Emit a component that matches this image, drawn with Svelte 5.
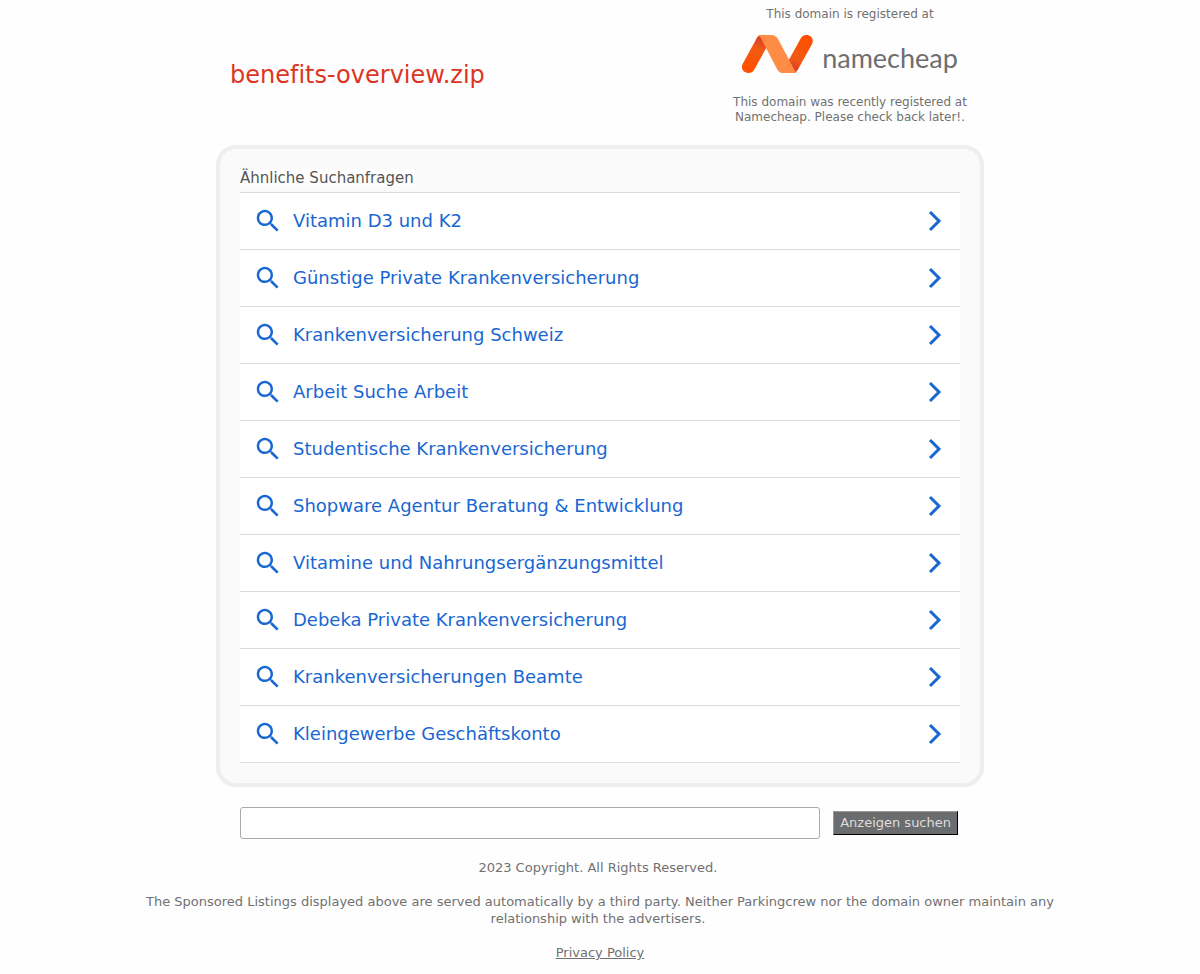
<script>
  const searches = [
    'Vitamin D3 und K2',
    'Günstige Private Krankenversicherung',
    'Krankenversicherung Schweiz',
    'Arbeit Suche Arbeit',
    'Studentische Krankenversicherung',
    'Shopware Agentur Beratung & Entwicklung',
    'Vitamine und Nahrungsergänzungsmittel',
    'Debeka Private Krankenversicherung',
    'Krankenversicherungen Beamte',
    'Kleingewerbe Geschäftskonto'
  ];
  let query = $state('');
</script>

<div class="page">
  <header>
    <h1>benefits-overview.zip</h1>
    <div class="registrar">
      <p>This domain is registered at</p>
      <a class="logo" href="#namecheap">
        <svg width="72" height="38" viewBox="0 0 72 38" aria-hidden="true">
          <defs>
            <linearGradient id="left" x1="20" y1="3" x2="6" y2="32" gradientUnits="userSpaceOnUse">
              <stop offset="0" stop-color="#d93d27" />
              <stop offset="0.35" stop-color="#f05a14" />
              <stop offset="1" stop-color="#ff5000" />
            </linearGradient>
            <linearGradient id="right" x1="51" y1="35" x2="65" y2="6" gradientUnits="userSpaceOnUse">
              <stop offset="0" stop-color="#d93d27" />
              <stop offset="0.35" stop-color="#f05a14" />
              <stop offset="1" stop-color="#ff5000" />
            </linearGradient>
          </defs>
          <path fill="url(#left)" d="M19 0C16.500 .4 15.400 1.800 14.400 3.700L.9 28.400C-1.700 33.200 1.300 38 6.400 38C9.400 38 11.300 36.600 12.500 34.300L25 11.500Z" />
          <path fill="url(#right)" d="M51.500 38C54 37.600 55.100 36.200 56.100 34.300L69.800 9.600C72.400 4.800 69.600 0 64.500 0C61.500 0 59.700 1.400 58.500 3.700L46 26.500Z" />
          <path fill="#ff8c44" d="M18.500 0H29C32.500 0 34.400 1.200 35.700 3.600L51.700 33.500C53 36 53.500 37.400 55 36.600C54 37.600 53 38 51.500 38H42C38.500 38 36.600 36.800 35.300 34.400L19.500 4.300C18.500 2.300 17.900 1.100 16 1.200C16.900 .3 17.600 0 18.500 0Z" />
        </svg>
        <span>namecheap</span>
      </a>
      <p>This domain was recently registered at Namecheap. Please check back later!.</p>
    </div>
  </header>

  <main>
    <h2><span>Ähnliche Suchanfragen</span></h2>
    <ul>
      {#each searches as term}
        <li>
          <a href="#{encodeURIComponent(term)}">
            <svg class="lens" viewBox="0 0 24 24" aria-hidden="true">
              <path d="M15.500 14h-.79l-.28-.27C15.410 12.590 16 11.110 16 9.500 16 5.910 13.090 3 9.500 3S3 5.910 3 9.500 5.910 16 9.500 16c1.610 0 3.090-.59 4.230-1.570l.27.28v.79l5 4.990L20.490 19l-4.990-5zm-6 0C7.010 14 5 11.990 5 9.500S7.010 5 9.500 5 14 7.010 14 9.500 11.990 14 9.500 14z" />
            </svg>
            <span>{term}</span>
            <svg class="arrow" viewBox="0 0 14 22" aria-hidden="true">
              <path d="M2 2L11 11L2 20" />
            </svg>
          </a>
        </li>
      {/each}
    </ul>
  </main>

  <form onsubmit={(event) => event.preventDefault()}>
    <input type="text" aria-label="Anzeigen suchen" bind:value={query} />
    <button type="submit">Anzeigen suchen</button>
  </form>

  <footer>
    <p>2023 Copyright. All Rights Reserved.&nbsp;</p>
    <p>The Sponsored Listings displayed above are served automatically by a third party. Neither Parkingcrew nor the domain owner maintain any relationship with the advertisers.&nbsp;</p>
    <p><a href="#privacy">Privacy Policy</a></p>
  </footer>
</div>

<style>
  :global(body) {
    margin: 0;
    background: #fefefe;
  }
  .page {
    font-family: "DejaVu Sans", Verdana, sans-serif;
    color: #717171;
    font-variant-ligatures: none;
  }
  .page * {
    box-sizing: border-box;
  }
  header, main, form {
    max-width: 768px;
    margin: 0 auto;
  }
  header {
    display: flex;
    justify-content: space-between;
    align-items: flex-end;
    padding: 7px 4px 20px 14px;
  }
  h1 {
    margin: 0 0 35px;
    font-size: 24px;
    line-height: 30px;
    font-weight: 400;
    color: #dc3522;
  }
  .registrar {
    width: 260px;
    padding: 0 8px;
    text-align: center;
    font-size: 12px;
    line-height: 15px;
  }
  .registrar p {
    margin: 0;
  }
  .logo {
    display: flex;
    gap: 8px;
    align-items: center;
    justify-content: center;
    height: 38px;
    margin: 13px 0 22px;
    color: #6d6e70;
    text-decoration: none;
  }
  .logo span {
    font-family: Lato, sans-serif;
    font-size: 27px;
    font-weight: 400;
    line-height: 38px;
    padding-top: 8px;
  }
  main {
    padding: 20px;
    border: 4px solid #eee;
    border-radius: 20px;
    background: #fafafa;
  }
  h2 {
    margin: 0;
    font-size: 15px;
    line-height: 18px;
    font-weight: 400;
    color: #555;
    padding-bottom: 5px;
  }
  h2 span {
    background: #fefefe;
  }
  ul {
    margin: 0;
    padding: 0;
    list-style: none;
    border-top: 1px solid #dcdcdf;
    background: #fff;
  }
  li {
    border-bottom: 1px solid #dcdcdf;
  }
  li a {
    display: flex;
    align-items: center;
    min-height: 56px;
    padding: 0 18px 0 13px;
    font-size: 18px;
    line-height: 22px;
    color: #1967d2;
    text-decoration: none;
  }
  li svg {
    flex: none;
  }
  .lens {
    width: 30px;
    height: 30px;
    margin-right: 10px;
    fill: #1967d2;
  }
  .arrow {
    width: 14px;
    height: 22px;
    margin-left: auto;
    fill: none;
    stroke: #1967d2;
    stroke-width: 3;
  }
  form {
    display: flex;
    align-items: center;
    gap: 13px;
    padding: 20px 26px 20px 24px;
  }
  input {
    flex: 1;
    min-width: 0;
    height: 32px;
    padding: 0 8px;
    border: 1px solid #aaa;
    border-radius: 3px;
    background: #fff;
    font: inherit;
    font-size: 15px;
  }
  button {
    height: 24px;
    padding: 0 6px 1px;
    border: 1px solid;
    border-color: #999 #000 #000 #999;
    border-radius: 0;
    background: #6b6c6e;
    color: #ddd;
    font: inherit;
    font-size: 13px;
  }
  footer {
    max-width: 940px;
    margin: 0 auto;
    text-align: center;
    font-size: 13px;
    line-height: 17px;
  }
  footer p {
    margin: 0 0 17px;
  }
  footer p:last-child {
    margin-bottom: 0;
  }
  footer a {
    color: inherit;
  }
</style>
